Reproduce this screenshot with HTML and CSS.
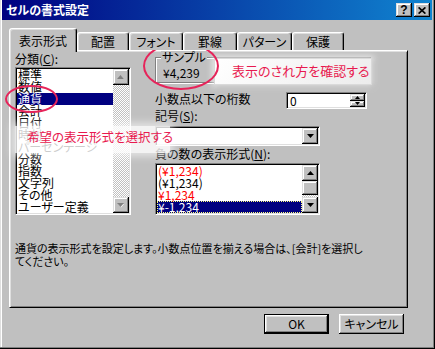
FILE: index.html
```html
<!DOCTYPE html>
<html lang="ja">
<head>
  <meta charset="UTF-8">
  <title>セルの書式設定</title>
  <link rel="stylesheet" href="styles.css">
</head>
<body>

  <div class="window">
    <!-- タイトルバー -->
    <div class="titlebar">
      <span class="title">セルの書式設定</span>
      <div class="caption-buttons">
        <span class="raised cap-btn help">?</span>
        <span class="raised cap-btn">
          <svg width="8" height="7" viewBox="0 0 8 7"><path d="M0.6 0.4 L7.4 6.6 M7.4 0.4 L0.6 6.6" stroke="#000" stroke-width="1.7"/></svg>
        </span>
      </div>
    </div>

    <div class="client">
      <!-- タブ -->
      <div class="tabs">
        <div class="tab active tab-format">表示形式</div>
        <div class="tab tab-align">配置</div>
        <div class="tab tab-font">フォント</div>
        <div class="tab tab-border">罫線</div>
        <div class="tab tab-pattern">パターン</div>
        <div class="tab tab-protect">保護</div>
      </div>

      <div class="panel">
        <div class="panel-main">
          <!-- 分類 -->
          <div class="category">
            <div class="label">分類(<u>C</u>):</div>
            <div class="sunken listbox cat-list">
              <ul class="items">
                <li>標準</li>
                <li>数値</li>
                <li class="selected">通貨</li>
                <li>会計</li>
                <li>日付</li>
                <li>時刻</li>
                <li>パーセンテージ</li>
                <li>分数</li>
                <li>指数</li>
                <li>文字列</li>
                <li>その他</li>
                <li>ユーザー定義</li>
              </ul>
              <div class="scrollbar">
                <span class="raised sb-btn">
                  <svg width="8" height="5" viewBox="0 0 8 5"><polygon points="4,1 7,4 1,4" fill="#fff"/><polygon points="3.5,0 7,4 0,4" fill="#808080"/></svg>
                </span>
                <span class="sb-track"></span>
                <span class="raised sb-btn">
                  <svg width="8" height="5" viewBox="0 0 8 5"><polygon points="1,1 7,1 4,4.5" fill="#fff"/><polygon points="0,0 7,0 3.5,4" fill="#808080"/></svg>
                </span>
              </div>
            </div>
          </div>

          <!-- 右側の設定 -->
          <div class="options">
            <fieldset class="sample">
              <legend>サンプル</legend>
              <div class="sample-value">¥4,239</div>
            </fieldset>

            <div class="decimal-row">
              <span class="label">小数点以下の桁数</span>
              <div class="sunken spin">
                <span class="spin-value">0</span>
                <div class="spin-btns">
                  <span class="raised spin-btn">
                    <svg width="5" height="3" viewBox="0 0 5 3"><polygon points="2.5,0 5,3 0,3" fill="#000"/></svg>
                  </span>
                  <span class="raised spin-btn">
                    <svg width="5" height="3" viewBox="0 0 5 3"><polygon points="0,0 5,0 2.5,3" fill="#000"/></svg>
                  </span>
                </div>
              </div>
            </div>

            <div class="label label-symbol">記号(<u>S</u>):</div>
            <div class="sunken combo">
              <span class="combo-value"></span>
              <span class="raised sb-btn">
                <svg width="7" height="4" viewBox="0 0 7 4"><polygon points="0,0 7,0 3.5,4" fill="#000"/></svg>
              </span>
            </div>

            <div class="label label-negative">負の数の表示形式(<u>N</u>):</div>
            <div class="sunken listbox neg-list">
              <ul class="items">
                <li class="red">(¥1,234)</li>
                <li>(¥1,234)</li>
                <li class="red">¥1,234</li>
                <li class="selected focus">¥-1,234</li>
              </ul>
              <div class="scrollbar">
                <span class="raised sb-btn">
                  <svg width="7" height="4" viewBox="0 0 7 4"><polygon points="3.5,0 7,4 0,4" fill="#000"/></svg>
                </span>
                <span class="raised sb-thumb"></span>
                <span class="sb-track"></span>
                <span class="raised sb-btn">
                  <svg width="7" height="4" viewBox="0 0 7 4"><polygon points="0,0 7,0 3.5,4" fill="#000"/></svg>
                </span>
              </div>
            </div>
          </div>
        </div>

        <p class="desc">通貨の表示形式を設定します。小数点位置を揃える場合は、[会計]を選択し<br>てください。</p>
      </div>

      <div class="actions">
        <button class="btn default">OK</button>
        <button class="btn">キャンセル</button>
      </div>
    </div>

    <!-- 説明用の書き込み -->
    <div class="callout callout-sample">表示のされ方を確認する</div>
    <div class="callout callout-category">希望の表示形式を選択する</div>
    <div class="mark mark-currency"></div>
    <div class="mark mark-sample"></div>
  </div>

</body>
</html>
```

FILE: styles.css
```css
body {
  margin: 0;
  font-family: "Noto Sans CJK JP", "Liberation Sans", sans-serif;
  font-size: 12px;
  line-height: 12px;
  font-feature-settings: "palt";
  color: #000;
}

/* ===== 共通の立体枠 ===== */
.raised {
  background: #c0c0c0;
  box-shadow: inset -1px -1px #000, inset 1px 1px #dfdfdf, inset -2px -2px #808080, inset 2px 2px #fff;
}
.sunken {
  box-sizing: border-box;
  border: 1px solid;
  border-color: #808080 #fff #fff #808080;
  box-shadow: inset 1px 1px #000, inset -1px -1px #dfdfdf;
  padding: 1px;
  background: #fff;
}

/* ===== ウィンドウ ===== */
.window {
  position: relative;
  width: 435px;
  height: 349px;
  box-sizing: border-box;
  padding: 0 3px 3px 2px;
  background: #c0c0c0;
  box-shadow: inset -1px -1px #000, inset -2px -2px #808080, inset 1px 0 #dfdfdf, inset 2px 0 #fff;
  overflow: hidden;
}
.titlebar {
  height: 20px;
  display: flex;
  align-items: center;
  padding: 0 2px;
  background: linear-gradient(to right, #000080, #1084d0);
}
.title {
  color: #fff;
  font-weight: bold;
  font-size: 12px;
  padding-left: 2px;
}
.caption-buttons {
  margin-left: auto;
  display: flex;
  gap: 2px;
}
.cap-btn {
  width: 16px;
  height: 14px;
  display: flex;
  align-items: center;
  justify-content: center;
}
.cap-btn.help {
  font-weight: bold;
  font-size: 12px;
  font-family: "Liberation Sans", sans-serif;
}

.client {
  padding: 8px 0 0 7px;
}

/* ===== タブ ===== */
.tabs {
  display: flex;
  align-items: flex-end;
  height: 22px;
  position: relative;
  z-index: 1;
}
.tab {
  height: 18px;
  box-sizing: border-box;
  border: 1px solid;
  border-bottom: 0;
  border-color: #fff #000 transparent #fff;
  border-radius: 3px 3px 0 0;
  box-shadow: inset -1px 0 #808080, inset 1px 1px #dfdfdf;
  background: #c0c0c0;
  display: flex;
  align-items: center;
  justify-content: center;
  padding-top: 1px;
}
.tab.active {
  height: 24px;
  margin-bottom: -2px;
  padding-top: 0;
}
.tab-format { width: 68px; }
.tab-align { width: 52px; }
.tab-font { width: 54px; }
.tab-border { width: 54px; }
.tab-pattern { width: 55px; }
.tab-protect { width: 52px; }

.panel {
  width: 399px;
  height: 258px;
  box-sizing: border-box;
  border: 1px solid;
  border-color: #fff #000 #000 #fff;
  box-shadow: inset 1px 1px #dfdfdf, inset -1px -1px #808080;
  padding: 2px 0 0 5px;
}
.panel-main {
  display: flex;
  gap: 24px;
}

u {
  text-decoration-thickness: 1px;
  text-underline-offset: 1px;
}

/* ===== リストボックス ===== */
.category {
  width: 116px;
}
.label {
  height: 12px;
  white-space: nowrap;
}
.listbox {
  display: flex;
}
.cat-list {
  margin-top: 2px;
  width: 116px;
  height: 148px;
}
.items {
  flex: 1;
  margin: 0;
  padding: 0;
  list-style: none;
}
.items li {
  height: 12px;
  line-height: 12px;
  padding-left: 1px;
  white-space: nowrap;
}
.items li.selected {
  background: #000080;
  color: #fff;
}
.items li.focus {
  outline: 1px dotted #ffff80;
  outline-offset: -1px;
}
.items li.red {
  color: #ff0000;
}

.scrollbar {
  width: 16px;
  display: flex;
  flex-direction: column;
}
.sb-btn {
  width: 16px;
  height: 16px;
  display: flex;
  align-items: center;
  justify-content: center;
  flex-shrink: 0;
}
.sb-thumb {
  height: 14px;
  flex-shrink: 0;
}
.sb-track {
  flex: 1;
  background: repeating-conic-gradient(#c0c0c0 0 25%, #fff 0 50%) 0 0 / 2px 2px;
}

/* ===== 右側 ===== */
.options {
  width: 217px;
}
.sample {
  margin: -2px 0 0;
  padding: 0;
  width: 216px;
  box-sizing: border-box;
  border: 1px solid #808080;
  box-shadow: 1px 1px #fff, inset 1px 1px #fff;
}
.sample legend {
  margin-left: 5px;
  padding: 0 1px;
  line-height: 12px;
  background: #c0c0c0;
}
.sample-value {
  margin: 4px 0 3px;
  padding-left: 7px;
}

.decimal-row {
  margin-top: 9px;
  display: grid;
  grid-template-columns: 131px 81px;
}
.decimal-row .label {
  margin-top: 1px;
}
.spin {
  height: 17px;
  display: flex;
}
.spin-value {
  flex: 1;
  padding-left: 2px;
  line-height: 13px;
}
.spin-btns {
  width: 15px;
  display: flex;
  flex-direction: column;
}
.spin-btn {
  flex: 1;
  display: flex;
  align-items: center;
  justify-content: center;
}

.label-symbol {
  margin-top: 1px;
}
.combo {
  margin-top: 4px;
  width: 165px;
  height: 20px;
  display: flex;
}
.combo-value {
  flex: 1;
}
.label-negative {
  margin-top: 2px;
}
.neg-list {
  margin-top: 3px;
  width: 165px;
  height: 52px;
}

.desc {
  margin: 27px 0 0;
  font-size: 11px;
  line-height: 13px;
  white-space: nowrap;
}

/* ===== ボタン ===== */
.actions {
  width: 399px;
  box-sizing: border-box;
  display: flex;
  justify-content: flex-end;
  gap: 10px;
  padding-right: 4px;
  margin-top: 6px;
}
.btn {
  width: 65px;
  height: 20px;
  border: none;
  padding: 0;
  font: inherit;
  color: #000;
  background: #c0c0c0;
  box-shadow: inset -1px -1px #000, inset 1px 1px #fff, inset -2px -2px #808080, inset 2px 2px #dfdfdf;
}
.btn.default {
  border: 1px solid #000;
}

/* ===== 書き込み（赤丸と吹き出し） ===== */
.mark {
  position: absolute;
  box-sizing: border-box;
  border: 2px solid #e6245a;
  border-radius: 50%;
}
.mark-currency {
  left: 5px;
  top: 85px;
  width: 53px;
  height: 28px;
}
.mark-sample {
  left: 143px;
  top: 42px;
  width: 76px;
  height: 48px;
}
.callout {
  position: absolute;
  box-sizing: border-box;
  color: #e8194f;
  white-space: nowrap;
}
.callout-sample {
  left: 214px;
  top: 58px;
  width: 158px;
  height: 27px;
  padding: 5px 0 0 17px;
  font-size: 13px;
  line-height: 14px;
  background: linear-gradient(135deg, #fff, #ececec);
  border: 1px solid #dadada;
  box-shadow: 0 0 6px 2px rgba(255, 255, 255, 0.7), 2px 2px 5px rgba(0, 0, 0, 0.2);
}
.callout-category {
  left: 15px;
  top: 126px;
  width: 155px;
  height: 27px;
  padding: 4px 0 0 12px;
  font-size: 12.5px;
  line-height: 13px;
  background: rgba(255, 255, 255, 0.8);
  box-shadow: 0 0 8px 3px rgba(255, 255, 255, 0.6);
}
```
